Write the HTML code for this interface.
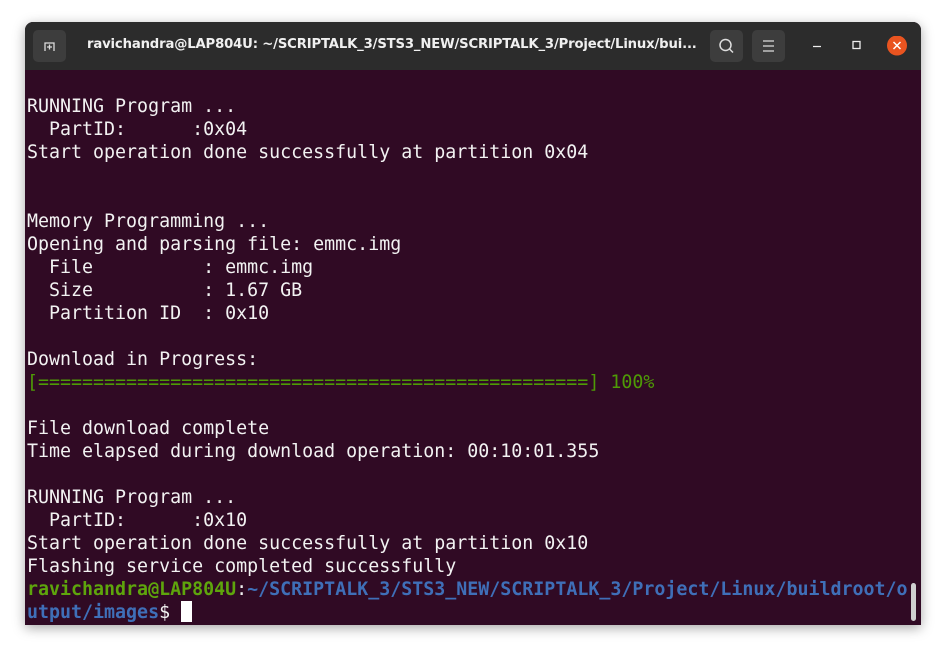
<!DOCTYPE html>
<html><head><style>
html,body{margin:0;padding:0;background:#fff;width:946px;height:653px;overflow:hidden}
.win{position:absolute;left:25px;top:22px;width:896px;height:603px;background:#300a24;border-radius:8px 8px 0 0;box-shadow:0 3px 12px rgba(0,0,0,.35);overflow:hidden}
.tb{position:absolute;left:0;top:0;width:896px;height:48px;background:#2c2c2c}
.btn{position:absolute;top:8px;width:33px;height:32px;border-radius:5px;background:#3d3d3d}
.title{position:absolute;left:62px;top:15px;width:615px;overflow:hidden;color:#f0f0f0;font:bold 13.2px "DejaVu Sans","Liberation Sans",sans-serif;white-space:nowrap;letter-spacing:-0.15px}
pre{position:absolute;left:2px;top:73px;margin:0;font:18.3px/23px "DejaVu Sans Mono","Liberation Mono",monospace;color:#f2f2f2}
.g{color:#4e9a06}.pg{color:#5ea50c;font-weight:bold}.b{color:#3f6fb8;font-weight:bold}
.cur{display:inline-block;width:11px;height:21px;background:#fff;vertical-align:-4px}
.sb{position:absolute;left:886px;top:561px;width:5px;height:38px;border-radius:3px;background:#cfcfcf}
</style></head><body>
<div class="win">
<div class="tb">
 <div class="btn" style="left:8px"><svg width="33" height="32"><path d="M12 21v-8h9v8M14 17h5M16.5 14.5v5" stroke="#ddd" stroke-width="1.3" fill="none"/></svg></div>
 <div class="title">ravichandra@LAP804U: ~/SCRIPTALK_3/STS3_NEW/SCRIPTALK_3/Project/Linux/bui...</div>
 <div class="btn" style="left:685px"><svg width="33" height="32"><circle cx="15.5" cy="15" r="5.5" stroke="#ddd" stroke-width="1.5" fill="none"/><path d="M19.5 19l3.5 3.5" stroke="#ddd" stroke-width="1.5"/></svg></div>
 <div class="btn" style="left:727px"><svg width="33" height="32"><path d="M11 11h11M11 16h11M11 21h11" stroke="#ddd" stroke-width="1.3"/></svg></div>
 <svg style="position:absolute;left:780px;top:14px" width="110" height="20"><path d="M8 10.5h8" stroke="#eee" stroke-width="1.3"/><rect x="48" y="5.5" width="7" height="7" stroke="#eee" stroke-width="1.3" fill="none"/><circle cx="92" cy="9.5" r="10" fill="#e95420"/><path d="M88.5 6l7 7M95.5 6l-7 7" stroke="#fff" stroke-width="1.5"/></svg>
</div>
<pre>
RUNNING Program ...
  PartID:      :0x04
Start operation done successfully at partition 0x04


Memory Programming ...
Opening and parsing file: emmc.img
  File          : emmc.img
  Size          : 1.67 GB
  Partition ID  : 0x10

Download in Progress:
<span class="g">[==================================================] 100%</span>

File download complete
Time elapsed during download operation: 00:10:01.355

RUNNING Program ...
  PartID:      :0x10
Start operation done successfully at partition 0x10
Flashing service completed successfully
<span class="pg">ravichandra@LAP804U</span>:<span class="b">~/SCRIPTALK_3/STS3_NEW/SCRIPTALK_3/Project/Linux/buildroot/o</span>
<span class="b">utput/images</span>$ <span class="cur"></span></pre>
<div class="sb"></div>
</div>
</body></html>
